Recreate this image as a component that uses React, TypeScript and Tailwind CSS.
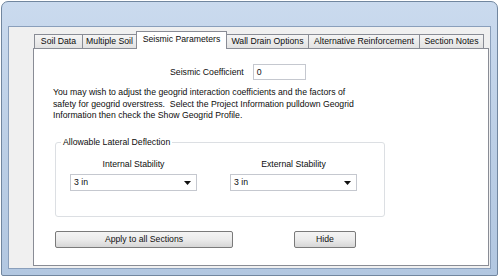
import React from "react";

const tabs = [
  { label: "Soil Data", w: "w-[49px]" },
  { label: "Multiple Soil", w: "w-[55px]" },
  { label: "Seismic Parameters", w: "w-[91px]", active: true },
  { label: "Wall Drain Options", w: "w-[83px]" },
  { label: "Alternative Reinforcement", w: "w-[112px]" },
  { label: "Section Notes", w: "w-[65px]" },
];

const font = { fontFamily: '"Liberation Sans", Arial, sans-serif' };

const Combo = ({ value }: { value: string }) => (
  <div className="flex items-center justify-between w-[127px] h-[17px] bg-white border border-[#c5c8cf] pl-[3px] pr-[5px]">
    <span>{value}</span>
    <svg width="7" height="4" viewBox="0 0 7 4">
      <path d="M0 0 H7 L3.5 4 Z" fill="#111" />
    </svg>
  </div>
);

const Button = ({ label, w }: { label: string; w: string }) => (
  <div
    className={`${w} h-[17px] flex items-center justify-center rounded-[2px] border border-[#7a7a7a] bg-gradient-to-b from-[#f4f4f4] via-[#ebebeb] to-[#d6d6d6] text-[#111]`}
  >
    {label}
  </div>
);

export default function App() {
  return (
    <div className="w-[500px] h-[277px] bg-white pt-[1px] pl-[1px] overflow-hidden" style={font}>
      <div className="w-[497px] h-[275px] rounded-t-[7px] rounded-b-[2px] border border-[#71869f] bg-gradient-to-b from-[#cadaee] via-[#bccfe6] to-[#b2c7e1] flex flex-col pt-[24px] px-[6px] pb-[6px]">
        <div className="flex-1 border border-[#8a9fbb] bg-[#f0f0f0] flex flex-col pl-[24px] pr-[1px] pb-[2px] pt-[4px] text-[8.7px] text-[#0d0d0d] leading-none">
          {/* tab strip */}
          <div className="flex items-end h-[17px] pl-[1px]">
            {tabs.map((t, i) =>
              t.active ? (
                <div
                  key={t.label}
                  className={`${t.w} -ml-px h-[18px] -mb-px relative z-10 bg-white border border-b-0 border-[#898c95] flex items-center justify-center pb-[2px]`}
                >
                  {t.label}
                </div>
              ) : (
                <div
                  key={t.label}
                  className={`${t.w} ${i === 0 ? "" : "-ml-px"} h-[14px] bg-gradient-to-b from-[#f5f5f5] to-[#e2e2e2] border border-b-0 border-[#898c95] flex items-center justify-center`}
                >
                  {t.label}
                </div>
              )
            )}
          </div>
          {/* tab page */}
          <div className="flex-1 bg-white border border-[#898c95] flex flex-col">
            <div className="flex items-center pl-[136px] pt-[15px] gap-[9px]">
              <span>Seismic Coefficient</span>
              <div className="w-[53px] h-[16px] border border-[#c5c8cf] bg-white flex items-center pl-[3px]">0</div>
            </div>
            <p className="pl-[19px] mt-[7px] leading-[11.5px]">
              You may wish to adjust the geogrid interaction coefficients and the factors of
              <br />
              safety for geogrid overstress.&nbsp; Select the Project Information pulldown Geogrid
              <br />
              Information then check the Show Geogrid Profile.
            </p>
            <div className="ml-[21px] mt-[20px] w-[330px] h-[75px] border border-[#dcdfe3] rounded-[3px] relative pt-[17px] pl-[14px]">
              <span className="absolute -top-[5px] left-[5px] bg-white px-[2px]">Allowable Lateral Deflection</span>
              <div className="flex gap-[33px]">
                <div className="flex flex-col items-center gap-[6px]">
                  <span>Internal Stability</span>
                  <Combo value="3 in" />
                </div>
                <div className="flex flex-col items-center gap-[6px]">
                  <span>External Stability</span>
                  <Combo value="3 in" />
                </div>
              </div>
            </div>
            <div className="flex items-center mt-[14px] ml-[21px] gap-[61px]">
              <Button label="Apply to all Sections" w="w-[178px]" />
              <Button label="Hide" w="w-[62px]" />
            </div>
          </div>
        </div>
      </div>
    </div>
  );
}
